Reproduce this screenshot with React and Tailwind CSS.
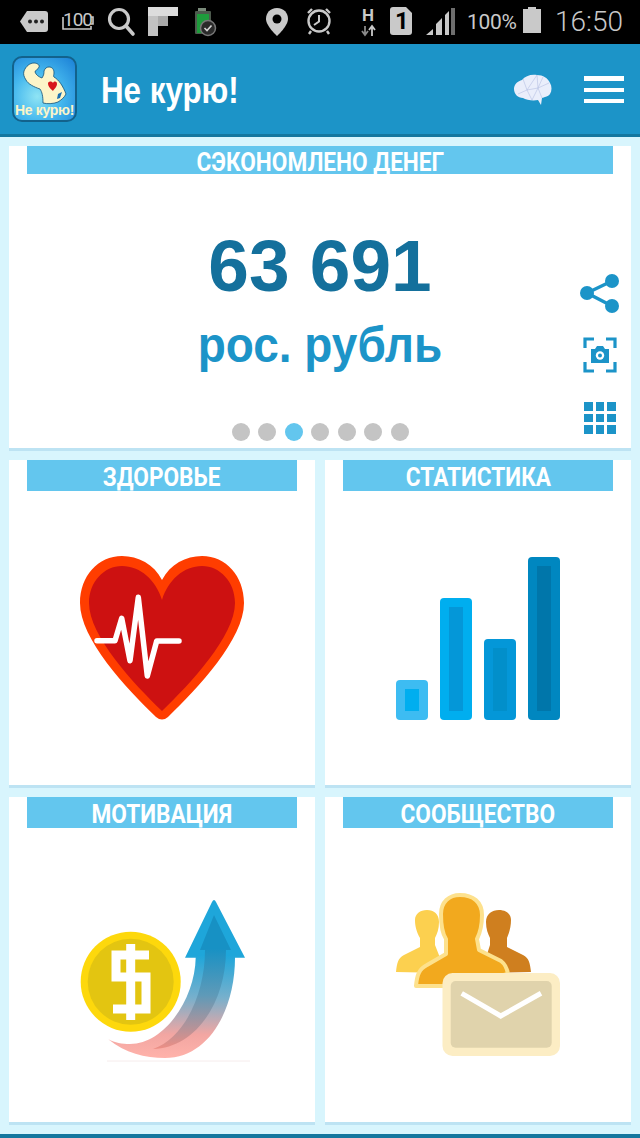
import React from "react";

const Gray = "#c9c9c9";

function StatusLeft() {
  return (
    <div className="flex items-start">
      <svg width="230" height="44" viewBox="0 0 230 44" className="block">
        <path d="M27 11H45Q48 11 48 14V29Q48 32 45 32H27L20 21.5Z" fill={Gray} />
        <circle cx="30" cy="21.5" r="2" fill="#222" /><circle cx="36" cy="21.5" r="2" fill="#222" /><circle cx="42" cy="21.5" r="2" fill="#222" />
        <path d="M63 17V29H91V26M91 17H93V24H91" fill="none" stroke={Gray} strokeWidth="1.6" />
        <circle cx="119" cy="19" r="9.5" fill="none" stroke={Gray} strokeWidth="3.2" />
        <path d="M126 26L133 34" stroke={Gray} strokeWidth="3.6" strokeLinecap="round" />
        <path d="M148 7H178V16H158V36H148Z" fill="#dcdcdc" />
        <rect x="158" y="16" width="10" height="10" fill="#a9a9a9" />
        <rect x="148" y="16" width="10" height="20" fill="#c2c2c2" />
        <rect x="198" y="8" width="8" height="3" fill="#7a8a7a" />
        <rect x="195" y="11" width="16" height="23" rx="1" fill="#4d5a4d" />
        <rect x="197" y="14" width="12" height="19" fill="#1e9c3c" />
        <circle cx="208" cy="28" r="7.5" fill="#2a2a2a" stroke="#777" strokeWidth="1.5" />
        <path d="M204.5 28L207 30.5L211.5 25.5" fill="none" stroke="#d5d5d5" strokeWidth="1.6" />
      </svg>
    </div>
  );
}

function StatusRight() {
  return (
    <svg width="200" height="44" viewBox="266 0 200 44" className="block">
      <path d="M277 8C270 8 266 13 266 19C266 26 277 36 277 36C277 36 288 26 288 19C288 13 284 8 277 8Z" fill={Gray} />
      <circle cx="277" cy="19" r="4.5" fill="#000" />
      <circle cx="319" cy="21" r="10.5" fill="none" stroke={Gray} strokeWidth="2.4" />
      <path d="M319 15V21.5L314 25" fill="none" stroke={Gray} strokeWidth="2" />
      <path d="M308 13L312 9M330 13L326 9M311 31L309 34M327 31L329 34" stroke={Gray} strokeWidth="2.4" />
      <path d="M365 26V34M362 31L365 35L368 31" fill="none" stroke="#8a8a8a" strokeWidth="1.8" />
      <path d="M372 36V27M369 30L372 26L375 30" fill="none" stroke={Gray} strokeWidth="1.8" />
      <path d="M393 7H406L412 13V32Q412 35 409 35H393Q390 35 390 32V10Q390 7 393 7Z" fill={Gray} />
      <path d="M426 35L433 29V35ZM436 35V24L442 18V35Z" fill={Gray} />
      <path d="M445 35V15L449 11V35Z" fill={Gray} />
      <path d="M451 35V8L455 8V35Z" fill="#6e6e6e" />
    </svg>
  );
}

function Logo() {
  return (
    <div className="relative w-[65px] h-[66px] rounded-[10px] border-[2px] border-[#12628c] bg-[radial-gradient(circle_at_38%_62%,#8fe4f4_0%,#45b8ee_45%,#1a7fd6_100%)] overflow-hidden">
      <svg width="61" height="62" viewBox="2 2 61 62" className="block">
        <path d="M12 15C14 10 18 7 22 7C25 7 28 9 27 11C26 14 23 14 23 16C24 19 27 21 30 22C32 19 32 17 32 15C33 12 35 11 37 11C40 11 42 13 42 17C42 19 41 20 42 21C47 24 51 30 54 38C52 42 49 44 46 46C41 48 35 48 31 47C31 40 30 36 28 33C22 31 16 28 14 24C12 21 11 18 12 15Z" fill="#fcf5c9" stroke="#12507a" strokeWidth="0.8" />
        <path d="M36 27C37 25 40 25 41 27C42 25 45 25 45 28C45 31 42 33 41 35C39 33 36 31 36 27Z" fill="#d8161c" />
        <path d="M46 38L50 36L48 42L45 43Z" fill="#1a6fb0" />
      </svg>
      <span className="absolute left-0 right-0 bottom-[2px] text-center font-['Liberation_Sans'] font-bold text-[14px] leading-[15px] text-[#fcf5c9] tracking-[-0.3px] whitespace-nowrap">Не курю!</span>
    </div>
  );
}

function Brain() {
  return (
    <svg width="40" height="32" viewBox="0 0 40 32" className="block mt-[2px]">
      <path d="M1 15C1 10 5 7 9 6C12 2 18 0 24 1C30 1 35 4 37 9C39 12 39 17 37 20C35 23 31 23 29 24L28 31L25 26C20 27 13 26 10 24C5 24 1 20 1 15Z" fill="#eaeefb" />
      <path d="M10 5L14 16L24 1M14 16L5 20M14 16L19 26M14 16L25 14L24 1M25 14L36 9M25 14L29 24M25 14L19 26M30 3L25 14" fill="none" stroke="#b6bfe3" strokeWidth="0.6" />
    </svg>
  );
}

function Heart() {
  return (
    <svg width="164" height="164" viewBox="0 0 164 164" className="block overflow-visible">
      <path d="M82 24C74 8 58 0 42 0C18 0 0 20 0 47C0 83 46 132 76 161Q82 166 88 161C118 132 164 83 164 47C164 20 146 0 122 0C106 0 90 8 82 24Z" fill="#ff3d00" />
      <path d="M82 44C76 24 60 10 42 10C24 10 9 26 9 47C9 80 54 128 82 155C110 128 155 80 155 47C155 26 140 10 122 10C104 10 88 24 82 44Z" fill="#cd1111" />
      <path d="M17 84.7H35L41.7 62.3L50 104.7L58.3 41.3L67.3 120L76.7 85H99" fill="none" stroke="#fff" strokeWidth="5.5" strokeLinecap="round" strokeLinejoin="round" />
    </svg>
  );
}

function Chart() {
  const bars = [
    ["0", "124", "#3dbcf2", "#00aeef"],
    ["44", "42", "#00aeef", "#0497d8"],
    ["88", "83", "#0497d8", "#028fca"],
    ["132", "1", "#0087c0", "#0076aa"],
  ];
  return (
    <svg width="164" height="164" viewBox="0 0 164 164" className="block overflow-visible">
      {bars.map(([x, y, a, b]) => (
        <g key={x}>
          <rect x={x} y={y} width="32" height={164 - Number(y)} rx="4" fill={a} />
          <rect x={Number(x) + 9} y={Number(y) + 9} width="14" height={164 - Number(y) - 18} fill={b} />
        </g>
      ))}
    </svg>
  );
}

function Money() {
  return (
    <svg width="164" height="164" viewBox="0 0 164 164" className="block overflow-visible">
      <defs>
        <linearGradient id="arrowOuter" x1="0" y1="0" x2="0" y2="1">
          <stop offset="0.35" stopColor="#1ea6da" />
          <stop offset="0.62" stopColor="#78b0cc" />
          <stop offset="0.85" stopColor="#f2a6a2" />
          <stop offset="1" stopColor="#ffb2aa" />
        </linearGradient>
        <linearGradient id="arrowInner" x1="0" y1="0" x2="0" y2="1">
          <stop offset="0.25" stopColor="#1791c4" />
          <stop offset="0.6" stopColor="#5f9ab8" />
          <stop offset="1" stopColor="#ee8e84" />
        </linearGradient>
      </defs>
      <path d="M27 168H170" stroke="#f6ecec" strokeWidth="1" />
      <circle cx="50.7" cy="88.7" r="50" fill="#fdd80c" />
      <circle cx="50.7" cy="88.7" r="43" fill="#e3c511" />
      <path d="M69 62H36V84H66V116H33M50.7 51V127" fill="none" stroke="#fff" strokeWidth="9" />
      <path d="M115.7 64.7C115 105 85 151 50 151C42 151 35 150 28.3 146.3C45 160 65 165 85 165C130 165 155 115 155 64.7H165L136 9Q134 5 132 9L105 64.7Z" fill="url(#arrowOuter)" />
      <path d="M134 22L120 57H125C125 100 105 145 73 156C115 155 146 110 146 57H151Z" fill="url(#arrowInner)" />
    </svg>
  );
}

function Community() {
  return (
    <svg width="164" height="164" viewBox="0 0 164 164" className="block overflow-visible">
      <path d="M0 79C1 70 2 65 8 62L24 54V45C20 38 19 32 19 27C19 21 24 17 31 17C38 17 43 21 43 29C43 36 41 41 39 45V52L50 80Z" fill="#fcd04f" />
      <path d="M135 79C134 70 133 65 127 62L111 54V45C114 38 115 32 115 27C115 21 110 17 103 17C96 17 90 21 90 29C90 36 92 41 94 45V52L85 80Z" fill="#cf7f1f" />
      <path d="M20 93C21 82 23 76 31 72L50 61V46C46 40 45 28 45 21C45 9 53 2 64 2C77 2 86 9 86 22C86 30 84 40 81 46L83 57L105 68C109 71 111 75 112 81L60 93Z" fill="#f2a91e" stroke="#fde18d" strokeWidth="4" strokeLinejoin="round" />
      <rect x="46.5" y="80" width="117.5" height="83" rx="10" fill="#fcedc4" />
      <rect x="54.7" y="88" width="101" height="66.7" rx="5" fill="#e0d3ac" />
      <path d="M65.7 100.3L104.7 123L145 100.3" fill="none" stroke="#fff" strokeWidth="5" />
    </svg>
  );
}

function LabelText({ children }) {
  return (
    <span className="inline-block scale-x-[0.87] text-white font-['Roboto'] font-bold text-[26px] leading-[24px] whitespace-nowrap">
      {children}
    </span>
  );
}

function Tile({ title, children }) {
  return (
    <div className="bg-white border-b-[3px] border-[#bde3f3] h-[328px] flex flex-col">
      <div className="mx-[18px] h-[31px] pt-[3px] bg-[#63c6ee] flex items-center justify-center">
        <LabelText>{title}</LabelText>
      </div>
      <div className="flex justify-center pt-[65px]">{children}</div>
    </div>
  );
}

function SideIcons() {
  return (
    <div className="absolute left-[571px] top-[127px] flex flex-col items-center w-[40px]">
      <svg width="40" height="40" viewBox="0 0 40 40" className="block">
        <path d="M32 8L7 20L32 33" fill="none" stroke="#1c94c8" strokeWidth="3.4" />
        <circle cx="32" cy="8" r="7" fill="#1c94c8" /><circle cx="7" cy="20" r="7" fill="#1c94c8" /><circle cx="32" cy="33" r="7" fill="#1c94c8" />
      </svg>
      <svg width="34" height="36" viewBox="0 0 34 36" className="block mt-[24px]">
        <path d="M2 11V2H11M23 2H32V11M2 25V34H11M23 34H32V25" fill="none" stroke="#1c94c8" strokeWidth="3.2" />
        <path d="M8 12H12L14 9H20L22 12H26V26H8Z" fill="#1c94c8" />
        <circle cx="17" cy="18.5" r="4.2" fill="#fff" /><circle cx="17" cy="18.5" r="2" fill="#1c94c8" />
      </svg>
      <div className="grid grid-cols-3 gap-[3px] mt-[29px]">
        {Array.from({ length: 9 }, (_, i) => <div key={i} className="w-[8.5px] h-[8.5px] bg-[#1c94c8]" />)}
      </div>
    </div>
  );
}

export default function App() {
  return (
    <div className="w-[640px] h-[1138px] bg-[#d8f5fd] flex flex-col overflow-hidden font-['Roboto',sans-serif]">
      <div className="h-[44px] bg-black relative flex items-start shrink-0">
        <StatusLeft />
        <div className="absolute left-[266px] top-0"><StatusRight /></div>
        <span className="absolute left-[63px] top-[11px] text-[19px] leading-[18px] text-[#c9c9c9] font-['Roboto'] tracking-[-1px]">100</span>
        <span className="absolute left-[362px] top-[6px] text-[17px] leading-[18px] font-bold text-[#c9c9c9] font-['Roboto']">H</span>
        <span className="absolute left-[395px] top-[8px] text-[24px] leading-[26px] font-bold text-black font-['Roboto']">1</span>
        <span className="absolute left-[467px] top-[9px] text-[21px] leading-[26px] text-[#c9c9c9] font-['Roboto'] tracking-[-0.3px]">100%</span>
        <div className="absolute left-[523px] top-[9px] w-[18px] h-[24px] bg-[#c9c9c9]">
          <div className="absolute left-[5px] -top-[2px] w-[8px] h-[2px] bg-[#c9c9c9]" />
        </div>
        <span className="absolute left-[555px] top-[5px] text-[28px] leading-[34px] text-[#c9c9c9] font-['Roboto'] font-light">16:50</span>
      </div>

      <div className="h-[93px] bg-[#1c94c8] border-b-[3px] border-[#14779f] shrink-0 flex items-center pl-[12px] pr-[16px]">
        <Logo />
        <span className="ml-[24px] mt-[4px] inline-block origin-left scale-x-[0.87] text-white font-['Liberation_Sans'] font-bold text-[36px] leading-none">Не курю!</span>
        <div className="ml-auto flex items-center gap-[31px]">
          <Brain />
          <div className="flex flex-col gap-[7px] w-[40px]">
            <div className="h-[5px] bg-white" /><div className="h-[4px] bg-white" /><div className="h-[4px] bg-white" />
          </div>
        </div>
      </div>

      <div className="px-[9px] pt-[9px] flex flex-col gap-[9px]">
        <div className="relative bg-white border-b-[3px] border-[#bde3f3] h-[305px] flex flex-col">
          <div className="mx-[18px] h-[28px] pt-[3px] bg-[#63c6ee] flex items-center justify-center">
            <LabelText>СЭКОНОМЛЕНО ДЕНЕГ</LabelText>
          </div>
          <div className="mt-[50px] text-center font-['Liberation_Sans'] font-bold text-[#14709c] text-[73px] leading-[84px]">63 691</div>
          <div className="mt-[5px] text-center font-['Liberation_Sans'] font-bold text-[#1c94c8] text-[50px] leading-[64px]">
            <span className="inline-block scale-x-[0.92]">рос. рубль</span>
          </div>
          <div className="mt-[46px] flex justify-center gap-[8.5px]">
            {[0, 1, 2, 3, 4, 5, 6].map((i) => (
              <div key={i} className={i === 2 ? "w-[18px] h-[18px] rounded-full bg-[#63c6ee]" : "w-[18px] h-[18px] rounded-full bg-[#c4c4c4]"} />
            ))}
          </div>
          <SideIcons />
        </div>

        <div className="grid grid-cols-2 gap-x-[10px] gap-y-[9px]">
          <Tile title="ЗДОРОВЬЕ"><Heart /></Tile>
          <Tile title="СТАТИСТИКА"><Chart /></Tile>
          <Tile title="МОТИВАЦИЯ"><Money /></Tile>
          <Tile title="СООБЩЕСТВО"><Community /></Tile>
        </div>
      </div>

      <div className="mt-auto h-[4px] bg-[#14779f] shrink-0" />
    </div>
  );
}
